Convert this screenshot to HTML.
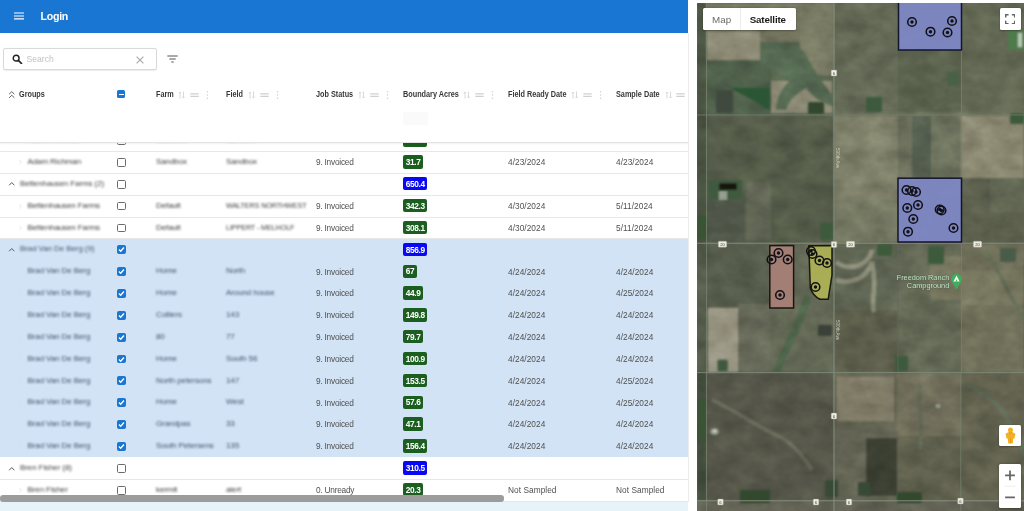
<!DOCTYPE html>
<html lang="en"><head><meta charset="utf-8"><title>Login</title>
<style>
html,body{margin:0;padding:0;}
body{width:1024px;height:511px;overflow:hidden;background:#fff;position:relative;font-family:"Liberation Sans",sans-serif;color:#333;}
.left{position:absolute;left:0;top:0;width:688px;height:511px;overflow:hidden;background:#fff;}
.vline{position:absolute;left:688px;top:33px;width:1px;height:469px;background:#ececec;}
.appbar{position:absolute;left:0;top:0;width:688px;height:33px;background:#1976d2;}
.appbar .burger{position:absolute;left:13.5px;top:12.3px;width:10.5px;height:8px;}
.appbar .title{position:absolute;left:40.5px;top:9.5px;font-size:10.6px;font-weight:700;color:#fff;line-height:13px;letter-spacing:-0.25px;}
.search{position:absolute;left:3.3px;top:48px;width:153.4px;height:21.5px;border:1px solid #d9d9d9;border-radius:2px;box-sizing:border-box;box-shadow:0 0.5px 1px rgba(0,0,0,.08);}
.search .ph{position:absolute;left:22.2px;top:5px;font-size:8.6px;color:#c2c2c2;line-height:11px;}
.rows{position:absolute;left:0;top:143px;width:688px;height:358.7px;overflow:hidden;}
.rowsin{position:absolute;left:0;top:-143px;width:688px;}
.row{position:absolute;left:0;width:688px;height:21.85px;box-sizing:border-box;border-bottom:1px solid #e7e7e7;}
.row.sel{border-bottom-color:transparent;}
.selbg{position:absolute;left:0;width:688px;background:#d2e3f5;}
.row span{position:absolute;white-space:nowrap;}
.tx,.nm{top:5.3px;font-size:8.3px;line-height:11px;color:#505050;letter-spacing:-0.1px;}
.st{letter-spacing:-0.23px;}
.dt{letter-spacing:0.05px;}
.blur{filter:blur(1px);color:#3c3c3c;font-size:8px;top:4.1px !important;}
.sel .blur{color:#40516a;}
.grp .blur{color:#444;}
.sel.grp .blur{color:#46566e;}
.up{font-size:7.2px !important;}
.cb{left:116.8px;top:6px;width:8.8px;height:8.8px;box-sizing:border-box;border:1.1px solid #6b6b6b;border-radius:1.6px;background:#fff;}
.cb.on{background:#1976d2;border-color:#1976d2;}
.cb svg{position:absolute;left:-1.1px;top:-1.1px;width:8.8px;height:8.8px;}
.chev{position:absolute;left:7.5px;top:6.7px;width:7.5px;height:7.5px;}
.chev2{position:absolute;left:16.5px;top:7.1px;width:6.5px;height:6.5px;}
.bd{left:403.1px;top:3.3px;height:12.5px;line-height:12.5px;padding:0.9px 2.6px 0 2.6px;border-radius:2px;background:#1b5e20;color:#fff;font-weight:700;font-size:8.3px;letter-spacing:-0.35px;}
.bd.blue{background:#0808f4;}
.hdr{position:absolute;left:0;top:33px;width:688px;height:110px;background:#fff;border-bottom:1px solid #e4e4e4;box-sizing:border-box;box-shadow:0 1px 1.5px rgba(0,0,0,.06);}
.hl{position:absolute;top:55.8px;font-size:8.2px;font-weight:700;color:#383838;line-height:11px;white-space:nowrap;transform:scaleX(0.888);transform-origin:0 50%;}
.hi{position:absolute;top:56.5px;width:8px;height:10px;}
.hscroll{position:absolute;left:0;top:495.3px;width:504px;height:6.4px;border-radius:3.2px;background:#9c9c9c;}
.foot{position:absolute;left:0;top:501.7px;width:688px;height:10px;background:#e6f3f9;}
.map{position:absolute;left:697px;top:3px;width:327px;height:508px;overflow:hidden;background:#6c705d;}
</style></head><body>
<div class="left">
 <div class="rows"><div class="rowsin">
<div class="selbg" style="top:239.36px;height:217.60px"></div>
<div class="row" style="top:130.11px"><svg class="chev2" viewBox="0 0 10 10"><path d="M3.5 1.5 L7 5 L3.5 8.5" fill="none" stroke="#dcdcdc" stroke-width="1"/></svg><span class="nm blur" style="left:27.5px">Adam Richman</span><span class="cb"></span><span class="tx blur" style="left:156px">Sandbox</span><span class="tx blur" style="left:226px">Sandbox</span><span class="tx st" style="left:316px">9. Invoiced</span><span class="bd">127.4</span><span class="tx dt" style="left:508px">4/22/2024</span><span class="tx dt" style="left:616px">4/23/2024</span></div>
<div class="row" style="top:151.96px"><svg class="chev2" viewBox="0 0 10 10"><path d="M3.5 1.5 L7 5 L3.5 8.5" fill="none" stroke="#dcdcdc" stroke-width="1"/></svg><span class="nm blur" style="left:27.5px">Adam Richman</span><span class="cb"></span><span class="tx blur" style="left:156px">Sandbox</span><span class="tx blur" style="left:226px">Sandbox</span><span class="tx st" style="left:316px">9. Invoiced</span><span class="bd">31.7</span><span class="tx dt" style="left:508px">4/23/2024</span><span class="tx dt" style="left:616px">4/23/2024</span></div>
<div class="row grp" style="top:173.81px"><svg class="chev" viewBox="0 0 10 10"><path d="M1.5 7 L5 3.4 L8.5 7" fill="none" stroke="#555" stroke-width="1.3"/></svg><span class="nm blur" style="left:20px">Bettenhausen Farms (2)</span><span class="cb"></span><span class="bd blue">650.4</span></div>
<div class="row" style="top:195.66px"><svg class="chev2" viewBox="0 0 10 10"><path d="M3.5 1.5 L7 5 L3.5 8.5" fill="none" stroke="#dcdcdc" stroke-width="1"/></svg><span class="nm blur" style="left:27.5px">Bettenhausen Farms</span><span class="cb"></span><span class="tx blur" style="left:156px">Default</span><span class="tx blur up" style="left:226px">WALTERS NORTHWEST</span><span class="tx st" style="left:316px">9. Invoiced</span><span class="bd">342.3</span><span class="tx dt" style="left:508px">4/30/2024</span><span class="tx dt" style="left:616px">5/11/2024</span></div>
<div class="row" style="top:217.51px"><svg class="chev2" viewBox="0 0 10 10"><path d="M3.5 1.5 L7 5 L3.5 8.5" fill="none" stroke="#dcdcdc" stroke-width="1"/></svg><span class="nm blur" style="left:27.5px">Bettenhausen Farms</span><span class="cb"></span><span class="tx blur" style="left:156px">Default</span><span class="tx blur up" style="left:226px">LIPPERT - MELHOLF</span><span class="tx st" style="left:316px">9. Invoiced</span><span class="bd">308.1</span><span class="tx dt" style="left:508px">4/30/2024</span><span class="tx dt" style="left:616px">5/11/2024</span></div>
<div class="row sel grp" style="top:239.36px"><svg class="chev" viewBox="0 0 10 10"><path d="M1.5 7 L5 3.4 L8.5 7" fill="none" stroke="#555" stroke-width="1.3"/></svg><span class="nm blur" style="left:20px">Brad Van De Berg (9)</span><span class="cb on"><svg viewBox="0 0 10 10"><path d="M2.2 5.2 L4.2 7.1 L7.9 2.9" fill="none" stroke="#fff" stroke-width="1.5"/></svg></span><span class="bd blue">856.9</span></div>
<div class="row sel" style="top:261.21px"><svg class="chev2" viewBox="0 0 10 10"><path d="M3.5 1.5 L7 5 L3.5 8.5" fill="none" stroke="#dcdcdc" stroke-width="1"/></svg><span class="nm blur" style="left:27.5px">Brad Van De Berg</span><span class="cb on"><svg viewBox="0 0 10 10"><path d="M2.2 5.2 L4.2 7.1 L7.9 2.9" fill="none" stroke="#fff" stroke-width="1.5"/></svg></span><span class="tx blur" style="left:156px">Home</span><span class="tx blur" style="left:226px">North</span><span class="tx st" style="left:316px">9. Invoiced</span><span class="bd">67</span><span class="tx dt" style="left:508px">4/24/2024</span><span class="tx dt" style="left:616px">4/24/2024</span></div>
<div class="row sel" style="top:283.06px"><svg class="chev2" viewBox="0 0 10 10"><path d="M3.5 1.5 L7 5 L3.5 8.5" fill="none" stroke="#dcdcdc" stroke-width="1"/></svg><span class="nm blur" style="left:27.5px">Brad Van De Berg</span><span class="cb on"><svg viewBox="0 0 10 10"><path d="M2.2 5.2 L4.2 7.1 L7.9 2.9" fill="none" stroke="#fff" stroke-width="1.5"/></svg></span><span class="tx blur" style="left:156px">Home</span><span class="tx blur" style="left:226px">Around house</span><span class="tx st" style="left:316px">9. Invoiced</span><span class="bd">44.9</span><span class="tx dt" style="left:508px">4/24/2024</span><span class="tx dt" style="left:616px">4/25/2024</span></div>
<div class="row sel" style="top:304.91px"><svg class="chev2" viewBox="0 0 10 10"><path d="M3.5 1.5 L7 5 L3.5 8.5" fill="none" stroke="#dcdcdc" stroke-width="1"/></svg><span class="nm blur" style="left:27.5px">Brad Van De Berg</span><span class="cb on"><svg viewBox="0 0 10 10"><path d="M2.2 5.2 L4.2 7.1 L7.9 2.9" fill="none" stroke="#fff" stroke-width="1.5"/></svg></span><span class="tx blur" style="left:156px">Colliers</span><span class="tx blur" style="left:226px">143</span><span class="tx st" style="left:316px">9. Invoiced</span><span class="bd">149.8</span><span class="tx dt" style="left:508px">4/24/2024</span><span class="tx dt" style="left:616px">4/24/2024</span></div>
<div class="row sel" style="top:326.76px"><svg class="chev2" viewBox="0 0 10 10"><path d="M3.5 1.5 L7 5 L3.5 8.5" fill="none" stroke="#dcdcdc" stroke-width="1"/></svg><span class="nm blur" style="left:27.5px">Brad Van De Berg</span><span class="cb on"><svg viewBox="0 0 10 10"><path d="M2.2 5.2 L4.2 7.1 L7.9 2.9" fill="none" stroke="#fff" stroke-width="1.5"/></svg></span><span class="tx blur" style="left:156px">80</span><span class="tx blur" style="left:226px">77</span><span class="tx st" style="left:316px">9. Invoiced</span><span class="bd">79.7</span><span class="tx dt" style="left:508px">4/24/2024</span><span class="tx dt" style="left:616px">4/24/2024</span></div>
<div class="row sel" style="top:348.61px"><svg class="chev2" viewBox="0 0 10 10"><path d="M3.5 1.5 L7 5 L3.5 8.5" fill="none" stroke="#dcdcdc" stroke-width="1"/></svg><span class="nm blur" style="left:27.5px">Brad Van De Berg</span><span class="cb on"><svg viewBox="0 0 10 10"><path d="M2.2 5.2 L4.2 7.1 L7.9 2.9" fill="none" stroke="#fff" stroke-width="1.5"/></svg></span><span class="tx blur" style="left:156px">Home</span><span class="tx blur" style="left:226px">South 56</span><span class="tx st" style="left:316px">9. Invoiced</span><span class="bd">100.9</span><span class="tx dt" style="left:508px">4/24/2024</span><span class="tx dt" style="left:616px">4/24/2024</span></div>
<div class="row sel" style="top:370.46px"><svg class="chev2" viewBox="0 0 10 10"><path d="M3.5 1.5 L7 5 L3.5 8.5" fill="none" stroke="#dcdcdc" stroke-width="1"/></svg><span class="nm blur" style="left:27.5px">Brad Van De Berg</span><span class="cb on"><svg viewBox="0 0 10 10"><path d="M2.2 5.2 L4.2 7.1 L7.9 2.9" fill="none" stroke="#fff" stroke-width="1.5"/></svg></span><span class="tx blur" style="left:156px">North petersons</span><span class="tx blur" style="left:226px">147</span><span class="tx st" style="left:316px">9. Invoiced</span><span class="bd">153.5</span><span class="tx dt" style="left:508px">4/24/2024</span><span class="tx dt" style="left:616px">4/25/2024</span></div>
<div class="row sel" style="top:392.31px"><svg class="chev2" viewBox="0 0 10 10"><path d="M3.5 1.5 L7 5 L3.5 8.5" fill="none" stroke="#dcdcdc" stroke-width="1"/></svg><span class="nm blur" style="left:27.5px">Brad Van De Berg</span><span class="cb on"><svg viewBox="0 0 10 10"><path d="M2.2 5.2 L4.2 7.1 L7.9 2.9" fill="none" stroke="#fff" stroke-width="1.5"/></svg></span><span class="tx blur" style="left:156px">Home</span><span class="tx blur" style="left:226px">West</span><span class="tx st" style="left:316px">9. Invoiced</span><span class="bd">57.6</span><span class="tx dt" style="left:508px">4/24/2024</span><span class="tx dt" style="left:616px">4/25/2024</span></div>
<div class="row sel" style="top:414.16px"><svg class="chev2" viewBox="0 0 10 10"><path d="M3.5 1.5 L7 5 L3.5 8.5" fill="none" stroke="#dcdcdc" stroke-width="1"/></svg><span class="nm blur" style="left:27.5px">Brad Van De Berg</span><span class="cb on"><svg viewBox="0 0 10 10"><path d="M2.2 5.2 L4.2 7.1 L7.9 2.9" fill="none" stroke="#fff" stroke-width="1.5"/></svg></span><span class="tx blur" style="left:156px">Grandpas</span><span class="tx blur" style="left:226px">33</span><span class="tx st" style="left:316px">9. Invoiced</span><span class="bd">47.1</span><span class="tx dt" style="left:508px">4/24/2024</span><span class="tx dt" style="left:616px">4/24/2024</span></div>
<div class="row sel" style="top:436.01px"><svg class="chev2" viewBox="0 0 10 10"><path d="M3.5 1.5 L7 5 L3.5 8.5" fill="none" stroke="#dcdcdc" stroke-width="1"/></svg><span class="nm blur" style="left:27.5px">Brad Van De Berg</span><span class="cb on"><svg viewBox="0 0 10 10"><path d="M2.2 5.2 L4.2 7.1 L7.9 2.9" fill="none" stroke="#fff" stroke-width="1.5"/></svg></span><span class="tx blur" style="left:156px">South Petersens</span><span class="tx blur" style="left:226px">135</span><span class="tx st" style="left:316px">9. Invoiced</span><span class="bd">156.4</span><span class="tx dt" style="left:508px">4/24/2024</span><span class="tx dt" style="left:616px">4/24/2024</span></div>
<div class="row grp" style="top:457.86px"><svg class="chev" viewBox="0 0 10 10"><path d="M1.5 7 L5 3.4 L8.5 7" fill="none" stroke="#555" stroke-width="1.3"/></svg><span class="nm blur" style="left:20px">Bren Fisher (8)</span><span class="cb"></span><span class="bd blue">310.5</span></div>
<div class="row" style="top:479.71px"><svg class="chev2" viewBox="0 0 10 10"><path d="M3.5 1.5 L7 5 L3.5 8.5" fill="none" stroke="#dcdcdc" stroke-width="1"/></svg><span class="nm blur" style="left:27.5px">Bren Fisher</span><span class="cb"></span><span class="tx blur" style="left:156px">kermit</span><span class="tx blur" style="left:226px">alert</span><span class="tx st" style="left:316px">0. Unready</span><span class="bd">20.3</span><span class="tx dt" style="left:508px">Not Sampled</span><span class="tx dt" style="left:616px">Not Sampled</span></div>
 </div></div>
 <div class="hdr">
  <svg class="chevd" style="position:absolute;left:7.5px;top:56.8px;width:7.5px;height:9px" viewBox="0 0 10 12"><path d="M1.5 5.6 L5 2.2 L8.5 5.6 M1.5 10.4 L5 7 L8.5 10.4" fill="none" stroke="#555" stroke-width="1.25"/></svg>
  <span class="hl" style="left:19px">Groups</span>
  <span style="position:absolute;left:116.7px;top:57.3px;width:8.8px;height:8.2px;border-radius:1.5px;background:#1976d2;"><span style="position:absolute;left:1.9px;top:3.4px;width:5px;height:1.4px;background:#fff"></span></span>
  <span class="hl" style="left:156px">Farm</span><svg class="hi" style="left:178.1px" viewBox="0 0 8 10"><path d="M2 8.5 V2 M0.8 3.2 L2 2 L3.2 3.2 M5.5 1.5 V8 M4.3 6.8 L5.5 8 L6.7 6.8" fill="none" stroke="#cfcfcf" stroke-width="0.8"/></svg><svg class="hi" style="left:189.79999999999998px;width:9px" viewBox="0 0 9 10"><path d="M0.3 3.9 H8.7 M0.3 6.3 H8.7" fill="none" stroke="#bdbdbd" stroke-width="0.9"/></svg><svg class="hi" style="left:205.8px;width:3px" viewBox="0 0 3 10"><circle cx="1.5" cy="1.8" r="0.7" fill="#ccc"/><circle cx="1.5" cy="5" r="0.7" fill="#ccc"/><circle cx="1.5" cy="8.2" r="0.7" fill="#ccc"/></svg><span class="hl" style="left:226px">Field</span><svg class="hi" style="left:248.0px" viewBox="0 0 8 10"><path d="M2 8.5 V2 M0.8 3.2 L2 2 L3.2 3.2 M5.5 1.5 V8 M4.3 6.8 L5.5 8 L6.7 6.8" fill="none" stroke="#cfcfcf" stroke-width="0.8"/></svg><svg class="hi" style="left:259.7px;width:9px" viewBox="0 0 9 10"><path d="M0.3 3.9 H8.7 M0.3 6.3 H8.7" fill="none" stroke="#bdbdbd" stroke-width="0.9"/></svg><svg class="hi" style="left:275.7px;width:3px" viewBox="0 0 3 10"><circle cx="1.5" cy="1.8" r="0.7" fill="#ccc"/><circle cx="1.5" cy="5" r="0.7" fill="#ccc"/><circle cx="1.5" cy="8.2" r="0.7" fill="#ccc"/></svg><span class="hl" style="left:316px">Job Status</span><svg class="hi" style="left:358.1px" viewBox="0 0 8 10"><path d="M2 8.5 V2 M0.8 3.2 L2 2 L3.2 3.2 M5.5 1.5 V8 M4.3 6.8 L5.5 8 L6.7 6.8" fill="none" stroke="#cfcfcf" stroke-width="0.8"/></svg><svg class="hi" style="left:369.8px;width:9px" viewBox="0 0 9 10"><path d="M0.3 3.9 H8.7 M0.3 6.3 H8.7" fill="none" stroke="#bdbdbd" stroke-width="0.9"/></svg><svg class="hi" style="left:385.8px;width:3px" viewBox="0 0 3 10"><circle cx="1.5" cy="1.8" r="0.7" fill="#ccc"/><circle cx="1.5" cy="5" r="0.7" fill="#ccc"/><circle cx="1.5" cy="8.2" r="0.7" fill="#ccc"/></svg><span class="hl" style="left:403px">Boundary Acres</span><svg class="hi" style="left:463.3px" viewBox="0 0 8 10"><path d="M2 8.5 V2 M0.8 3.2 L2 2 L3.2 3.2 M5.5 1.5 V8 M4.3 6.8 L5.5 8 L6.7 6.8" fill="none" stroke="#cfcfcf" stroke-width="0.8"/></svg><svg class="hi" style="left:475.0px;width:9px" viewBox="0 0 9 10"><path d="M0.3 3.9 H8.7 M0.3 6.3 H8.7" fill="none" stroke="#bdbdbd" stroke-width="0.9"/></svg><svg class="hi" style="left:491.0px;width:3px" viewBox="0 0 3 10"><circle cx="1.5" cy="1.8" r="0.7" fill="#ccc"/><circle cx="1.5" cy="5" r="0.7" fill="#ccc"/><circle cx="1.5" cy="8.2" r="0.7" fill="#ccc"/></svg><span class="hl" style="left:508px">Field Ready Date</span><svg class="hi" style="left:571.2px" viewBox="0 0 8 10"><path d="M2 8.5 V2 M0.8 3.2 L2 2 L3.2 3.2 M5.5 1.5 V8 M4.3 6.8 L5.5 8 L6.7 6.8" fill="none" stroke="#cfcfcf" stroke-width="0.8"/></svg><svg class="hi" style="left:582.9000000000001px;width:9px" viewBox="0 0 9 10"><path d="M0.3 3.9 H8.7 M0.3 6.3 H8.7" fill="none" stroke="#bdbdbd" stroke-width="0.9"/></svg><svg class="hi" style="left:598.9000000000001px;width:3px" viewBox="0 0 3 10"><circle cx="1.5" cy="1.8" r="0.7" fill="#ccc"/><circle cx="1.5" cy="5" r="0.7" fill="#ccc"/><circle cx="1.5" cy="8.2" r="0.7" fill="#ccc"/></svg><span class="hl" style="left:616px">Sample Date</span><svg class="hi" style="left:664.6px" viewBox="0 0 8 10"><path d="M2 8.5 V2 M0.8 3.2 L2 2 L3.2 3.2 M5.5 1.5 V8 M4.3 6.8 L5.5 8 L6.7 6.8" fill="none" stroke="#cfcfcf" stroke-width="0.8"/></svg><svg class="hi" style="left:676.3000000000001px;width:9px" viewBox="0 0 9 10"><path d="M0.3 3.9 H8.7 M0.3 6.3 H8.7" fill="none" stroke="#bdbdbd" stroke-width="0.9"/></svg><svg class="hi" style="left:692.3000000000001px;width:3px" viewBox="0 0 3 10"><circle cx="1.5" cy="1.8" r="0.7" fill="#ccc"/><circle cx="1.5" cy="5" r="0.7" fill="#ccc"/><circle cx="1.5" cy="8.2" r="0.7" fill="#ccc"/></svg>
  <span style="position:absolute;left:403px;top:79.3px;width:25px;height:13px;background:#fafafa;border-radius:2px"></span>
 </div>
 <div class="appbar">
  <svg class="burger" viewBox="0 0 10.5 8"><path d="M0 1 H10.5 M0 3.95 H10.5 M0 6.9 H10.5" stroke="#fff" stroke-width="1.15" fill="none"/></svg>
  <span class="title">Login</span>
 </div>
 <div class="search">
  <svg style="position:absolute;left:7.8px;top:4.8px;width:10.6px;height:10.6px" viewBox="0 0 12 12"><circle cx="4.7" cy="4.7" r="3.3" fill="none" stroke="#222" stroke-width="1.6"/><path d="M7.2 7.2 L10.8 10.8" stroke="#222" stroke-width="1.9" stroke-linecap="round"/></svg>
  <span class="ph">Search</span>
  <svg style="position:absolute;left:131.8px;top:6.6px;width:8px;height:8px" viewBox="0 0 8 8"><path d="M0.6 0.6 L7.4 7.4 M7.4 0.6 L0.6 7.4" stroke="#ababab" stroke-width="1.15" fill="none"/></svg>
 </div>
 <svg style="position:absolute;left:166.5px;top:54.5px;width:11px;height:8px" viewBox="0 0 11 8"><path d="M0.3 1 H10.7 M2.3 4 H8.7 M4.3 7 H6.7" stroke="#555" stroke-width="1.15" fill="none"/></svg>
 <div class="hscroll"></div>
 <div class="foot"></div>
</div>
<div class="vline"></div>
<div class="map">
<svg width="327" height="508" viewBox="697 3 327 508" style="position:absolute;left:0;top:0">
<defs><filter id="bl" x="-5%" y="-5%" width="110%" height="110%"><feGaussianBlur stdDeviation="1.1"/></filter><filter id="bl2" x="-20%" y="-20%" width="140%" height="140%"><feGaussianBlur stdDeviation="0.9"/></filter><filter id="nz" x="0" y="0" width="100%" height="100%" color-interpolation-filters="sRGB"><feTurbulence type="fractalNoise" baseFrequency="0.045 0.06" numOctaves="3" seed="7"/><feColorMatrix type="matrix" values="0.9 0 0 0 0.05  0.9 0 0 0 0.05  0.9 0 0 0 0.05  0 0 0 0 1"/></filter></defs>
<rect x="697" y="3" width="327" height="508" fill="#606453"/>
<g filter="url(#bl)">
<rect x="697" y="3" width="9" height="508" fill="#4c5242"/>
<rect x="706" y="3" width="128" height="112" fill="#58654f"/>
<rect x="706" y="3" width="66" height="28" fill="#747661"/>
<rect x="707" y="31" width="53" height="29" fill="#8c8a74"/>
<rect x="760" y="3" width="40" height="39" fill="#747661"/>
<rect x="706" y="60" width="65" height="55" fill="#50604c"/>
<rect x="771" y="81" width="61" height="32" fill="#8a8873"/>
<rect x="800" y="3" width="34" height="72" fill="#797a64"/>
<rect x="834" y="3" width="64" height="112" fill="#636955"/>
<rect x="898" y="50" width="63" height="65" fill="#5a624e"/>
<rect x="961" y="3" width="63" height="112" fill="#626752"/>
<rect x="834" y="112" width="190" height="6" fill="#6c705c"/>
<rect x="706" y="116" width="128" height="127" fill="#545b4a"/>
<rect x="746" y="182" width="25" height="58" fill="#626655"/>
<rect x="706" y="200" width="39" height="43" fill="#505648"/>
<rect x="834" y="116" width="64" height="127" fill="#7e8069"/>
<rect x="834" y="200" width="64" height="43" fill="#757862"/>
<rect x="898" y="116" width="14" height="62" fill="#6c705c"/>
<rect x="912" y="116" width="19" height="62" fill="#545e4f"/>
<rect x="931" y="116" width="30" height="62" fill="#6c725d"/>
<rect x="898" y="178" width="63" height="65" fill="#646856"/>
<rect x="961" y="116" width="63" height="62" fill="#8a8871"/>
<rect x="961" y="178" width="63" height="65" fill="#5c614e"/>
<rect x="990" y="178" width="34" height="34" fill="#646754"/>
<rect x="697" y="244" width="73" height="128" fill="#565b4c"/>
<rect x="708" y="308" width="30" height="64" fill="#989482"/>
<rect x="738" y="304" width="62" height="68" fill="#686a5a"/>
<rect x="770" y="244" width="64" height="128" fill="#626755"/>
<rect x="834" y="244" width="64" height="66" fill="#5e6553"/>
<rect x="834" y="310" width="64" height="62" fill="#5b5d4c"/>
<rect x="898" y="244" width="63" height="128" fill="#646854"/>
<rect x="930" y="256" width="31" height="44" fill="#76765f"/>
<rect x="961" y="244" width="63" height="128" fill="#6f705a"/>
<rect x="961" y="270" width="63" height="35" fill="#787860"/>
<rect x="697" y="372" width="9" height="139" fill="#424e3e"/>
<rect x="706" y="373" width="128" height="128" fill="#55574a"/>
<rect x="834" y="373" width="64" height="128" fill="#646452"/>
<rect x="837" y="377" width="57" height="44" fill="#807c68"/>
<rect x="866" y="438" width="31" height="58" fill="#3a4032"/>
<rect x="897" y="373" width="64" height="63" fill="#706e5a"/>
<rect x="897" y="436" width="64" height="65" fill="#5f5f4e"/>
<rect x="961" y="373" width="63" height="128" fill="#626250"/>
<rect x="697" y="501" width="327" height="10" fill="#646455"/>
<path d="M762 44 C775 40 796 40 806 54 C812 68 824 84 833 96 L833 106 C822 104 812 96 806 88 C800 92 790 98 786 110 L776 110 C776 96 784 86 790 80 C780 76 770 68 760 62 Z" fill="#566b52"/>
<path d="M836 262 C850 272 868 266 872 250 M836 280 C850 284 866 280 872 262 M872 262 C878 290 870 300 874 312" fill="none" stroke="#8d8f79" stroke-width="4.5"/>
<path d="M808 296 C802 318 790 340 776 372" fill="none" stroke="#50664c" stroke-width="7"/>
<path d="M712 400 C730 408 748 420 770 432 C790 440 800 452 812 470" fill="none" stroke="#6a6d5c" stroke-width="3.5"/>
<path d="M965 385 C985 392 1000 405 1012 425 C1018 440 1022 450 1024 456" fill="none" stroke="#5f6a55" stroke-width="4"/>
<path d="M920 385 C918 410 924 430 920 450" fill="none" stroke="#646a56" stroke-width="4"/>
<path d="M985 250 C1000 270 1010 300 1024 318" fill="none" stroke="#677059" stroke-width="4"/>
</g>
<rect x="697" y="3" width="327" height="508" filter="url(#nz)" opacity="0.2" style="mix-blend-mode:overlay"/>
<g filter="url(#bl2)">
<path d="M729 87.7 L769.8 87.7 L769.8 110.5 L750.8 99 Z" fill="#2a5636"/>
<rect x="716" y="90" width="17" height="23" fill="#3f4a3c" rx="1.5"/>
<rect x="866" y="97" width="16" height="15" fill="#3e5a3c" rx="1.5"/>
<rect x="947" y="72" width="13" height="14" fill="#4a6246" rx="1.5"/>
<rect x="808" y="102" width="16" height="12" fill="#33472f" rx="1.5"/>
<rect x="708" y="180" width="34" height="20" fill="#3f5a3f" rx="1.5"/>
<rect x="719" y="183" width="18" height="7" fill="#15170f" rx="1.5"/>
<rect x="697" y="215" width="10" height="25" fill="#3a5236" rx="1.5"/>
<rect x="820" y="223" width="13" height="17" fill="#3d5a3c" rx="1.5"/>
<rect x="1008" y="30" width="16" height="20" fill="#4f7a4c" rx="1.5"/>
<rect x="1010" y="113" width="14" height="11" fill="#3e5a3e" rx="1.5"/>
<rect x="877" y="244" width="15" height="12" fill="#3d5a3a" rx="1.5"/>
<rect x="928" y="246" width="16" height="18" fill="#3d5a3c" rx="1.5"/>
<rect x="1000" y="248" width="16" height="14" fill="#4a5c48" rx="1.5"/>
<rect x="818" y="325" width="14" height="11" fill="#3a4038" rx="1.5"/>
<rect x="717.5" y="359.7" width="10.200000000000045" height="11.800000000000011" fill="#3f5840" rx="1.5"/>
<rect x="895" y="356" width="13" height="15" fill="#3c5a3c" rx="1.5"/>
<rect x="740" y="490" width="30" height="13" fill="#30482e" rx="1.5"/>
<rect x="825" y="480" width="13" height="17" fill="#384a34" rx="1.5"/>
<rect x="858" y="482" width="12" height="14" fill="#384a34" rx="1.5"/>
<rect x="897" y="492" width="25" height="11" fill="#30482e" rx="1.5"/>
<rect x="697" y="400" width="9" height="40" fill="#3a5236" rx="1.5"/>
<rect x="719" y="192" width="8" height="1.6" fill="#c8cbbd"/><rect x="719" y="195" width="8" height="1.6" fill="#c8cbbd"/><rect x="719" y="198" width="8" height="1.4" fill="#c8cbbd"/>
<rect x="1018" y="33" width="4" height="14" fill="#b9c8b4"/>
<ellipse cx="714.5" cy="431.5" rx="4" ry="3.2" fill="#9ea596"/><rect x="713.6" y="430" width="2.4" height="1.8" fill="#e4e6dc"/>
<ellipse cx="938" cy="406" rx="2.6" ry="2" fill="#9aa090"/>
</g>
<g fill="none" stroke-linecap="butt">
<path d="M697 243.3 H1024" stroke="#808d7c" stroke-width="1.1"/>
<path d="M834 3 V511" stroke="#7f8e7d" stroke-width="1.1"/>
<path d="M706.5 3 V511" stroke="#76836f" stroke-width="0.8"/>
<path d="M697 115 H1024" stroke="#74806c" stroke-width="0.8"/>
<path d="M697 372.6 H1024" stroke="#7d8a78" stroke-width="0.9"/>
<path d="M697 500.8 H1024" stroke="#87927f" stroke-width="1"/>
<path d="M960.8 372 V511 M961.5 3 V178" stroke="#75826f" stroke-width="0.8"/>
<path d="M961.5 244 V372" stroke="#7a806e" stroke-width="0.7"/>
<path d="M898 244 V372" stroke="#60685a" stroke-width="0.8"/>
</g>
<text transform="translate(835.6,148) rotate(90)" font-size="4.6" font-family="Liberation Sans, sans-serif" fill="#d8dacb" opacity="0.85">500th Ave</text>
<text transform="translate(835.6,320) rotate(90)" font-size="4.6" font-family="Liberation Sans, sans-serif" fill="#d8dacb" opacity="0.85">500th Ave</text>
<rect x="898.5" y="0" width="63" height="50" fill="#7f88c6" fill-opacity="0.93" stroke="#15152e" stroke-width="1.5"/>
<rect x="898" y="178.2" width="63.5" height="63.8" fill="#7f88c6" fill-opacity="0.93" stroke="#15152e" stroke-width="1.5"/>
<rect x="769.8" y="245.6" width="23.8" height="62.4" fill="#a68077" fill-opacity="0.95" stroke="#1c1512" stroke-width="1.5"/>
<path d="M808.8 245.7 H832 V275 L828.2 299.3 H820 Q813 296 810.3 288 Z" fill="#adb155" fill-opacity="0.95" stroke="#1a1a0c" stroke-width="1.5" stroke-linejoin="round"/>
<circle cx="912" cy="22" r="4.3" fill="none" stroke="#111118" stroke-width="1.55"/><circle cx="912" cy="22" r="1.7" fill="#111118"/>
<circle cx="930.5" cy="31.7" r="4.3" fill="none" stroke="#111118" stroke-width="1.55"/><circle cx="930.5" cy="31.7" r="1.7" fill="#111118"/>
<circle cx="947.5" cy="32.5" r="4.3" fill="none" stroke="#111118" stroke-width="1.55"/><circle cx="947.5" cy="32.5" r="1.7" fill="#111118"/>
<circle cx="952" cy="21" r="4.3" fill="none" stroke="#111118" stroke-width="1.55"/><circle cx="952" cy="21" r="1.7" fill="#111118"/>
<circle cx="906.5" cy="190" r="4.3" fill="none" stroke="#111118" stroke-width="1.55"/><circle cx="906.5" cy="190" r="1.7" fill="#111118"/>
<circle cx="912" cy="191" r="4.3" fill="none" stroke="#111118" stroke-width="1.55"/><circle cx="912" cy="191" r="1.7" fill="#111118"/>
<circle cx="916" cy="192" r="4.3" fill="none" stroke="#111118" stroke-width="1.55"/><circle cx="916" cy="192" r="1.7" fill="#111118"/>
<circle cx="918" cy="205" r="4.3" fill="none" stroke="#111118" stroke-width="1.55"/><circle cx="918" cy="205" r="1.7" fill="#111118"/>
<circle cx="907.3" cy="208" r="4.3" fill="none" stroke="#111118" stroke-width="1.55"/><circle cx="907.3" cy="208" r="1.7" fill="#111118"/>
<circle cx="913.3" cy="219" r="4.3" fill="none" stroke="#111118" stroke-width="1.55"/><circle cx="913.3" cy="219" r="1.7" fill="#111118"/>
<circle cx="908" cy="231.7" r="4.3" fill="none" stroke="#111118" stroke-width="1.55"/><circle cx="908" cy="231.7" r="1.7" fill="#111118"/>
<circle cx="939.7" cy="209.5" r="4.3" fill="none" stroke="#111118" stroke-width="1.55"/><circle cx="939.7" cy="209.5" r="1.7" fill="#111118"/>
<circle cx="941.5" cy="210.5" r="4.3" fill="none" stroke="#111118" stroke-width="1.55"/><circle cx="941.5" cy="210.5" r="1.7" fill="#111118"/>
<circle cx="953.5" cy="228" r="4.3" fill="none" stroke="#111118" stroke-width="1.55"/><circle cx="953.5" cy="228" r="1.7" fill="#111118"/>
<circle cx="778.5" cy="253" r="4.3" fill="none" stroke="#111118" stroke-width="1.55"/><circle cx="778.5" cy="253" r="1.7" fill="#111118"/>
<circle cx="771.5" cy="259.5" r="4.3" fill="none" stroke="#111118" stroke-width="1.55"/><circle cx="771.5" cy="259.5" r="1.7" fill="#111118"/>
<circle cx="787.7" cy="259.5" r="4.3" fill="none" stroke="#111118" stroke-width="1.55"/><circle cx="787.7" cy="259.5" r="1.7" fill="#111118"/>
<circle cx="780" cy="295" r="4.3" fill="none" stroke="#111118" stroke-width="1.55"/><circle cx="780" cy="295" r="1.7" fill="#111118"/>
<circle cx="811" cy="251" r="4.3" fill="none" stroke="#111118" stroke-width="1.55"/><circle cx="811" cy="251" r="1.7" fill="#111118"/>
<circle cx="812.5" cy="254" r="4.3" fill="none" stroke="#111118" stroke-width="1.55"/><circle cx="812.5" cy="254" r="1.7" fill="#111118"/>
<circle cx="819.5" cy="260.5" r="4.3" fill="none" stroke="#111118" stroke-width="1.55"/><circle cx="819.5" cy="260.5" r="1.7" fill="#111118"/>
<circle cx="827" cy="263" r="4.3" fill="none" stroke="#111118" stroke-width="1.55"/><circle cx="827" cy="263" r="1.7" fill="#111118"/>
<circle cx="815.5" cy="287" r="4.3" fill="none" stroke="#111118" stroke-width="1.55"/><circle cx="815.5" cy="287" r="1.7" fill="#111118"/>
<rect x="718.3" y="241.2" width="8.4" height="6" rx="0.8" fill="#ecece0" stroke="#9a9a90" stroke-width="0.4"/><text x="722.5" y="245.7" font-size="4.2" font-family="Liberation Sans, sans-serif" text-anchor="middle" fill="#444">20</text>
<rect x="846.3" y="241.2" width="8.4" height="6" rx="0.8" fill="#ecece0" stroke="#9a9a90" stroke-width="0.4"/><text x="850.5" y="245.7" font-size="4.2" font-family="Liberation Sans, sans-serif" text-anchor="middle" fill="#444">20</text>
<rect x="973.3" y="241.2" width="8.4" height="6" rx="0.8" fill="#ecece0" stroke="#9a9a90" stroke-width="0.4"/><text x="977.5" y="245.7" font-size="4.2" font-family="Liberation Sans, sans-serif" text-anchor="middle" fill="#444">20</text>
<rect x="831.2" y="241.6" width="5.6" height="6" rx="0.8" fill="#ecece0" stroke="#9a9a90" stroke-width="0.4"/><text x="834" y="246.1" font-size="4.2" font-family="Liberation Sans, sans-serif" text-anchor="middle" fill="#444">6</text>
<rect x="831.2" y="70" width="5.6" height="6" rx="0.8" fill="#ecece0" stroke="#9a9a90" stroke-width="0.4"/><text x="834" y="74.5" font-size="4.2" font-family="Liberation Sans, sans-serif" text-anchor="middle" fill="#444">6</text>
<rect x="831.2" y="413" width="5.6" height="6" rx="0.8" fill="#ecece0" stroke="#9a9a90" stroke-width="0.4"/><text x="834" y="417.5" font-size="4.2" font-family="Liberation Sans, sans-serif" text-anchor="middle" fill="#444">6</text>
<rect x="717.7" y="499" width="5.6" height="6" rx="0.8" fill="#ecece0" stroke="#9a9a90" stroke-width="0.4"/><text x="720.5" y="503.5" font-size="4.2" font-family="Liberation Sans, sans-serif" text-anchor="middle" fill="#444">6</text>
<rect x="813.2" y="499" width="5.6" height="6" rx="0.8" fill="#ecece0" stroke="#9a9a90" stroke-width="0.4"/><text x="816" y="503.5" font-size="4.2" font-family="Liberation Sans, sans-serif" text-anchor="middle" fill="#444">6</text>
<rect x="846.2" y="499" width="5.6" height="6" rx="0.8" fill="#ecece0" stroke="#9a9a90" stroke-width="0.4"/><text x="849" y="503.5" font-size="4.2" font-family="Liberation Sans, sans-serif" text-anchor="middle" fill="#444">6</text>
<rect x="957.7" y="498" width="5.6" height="6" rx="0.8" fill="#ecece0" stroke="#9a9a90" stroke-width="0.4"/><text x="960.5" y="502.5" font-size="4.2" font-family="Liberation Sans, sans-serif" text-anchor="middle" fill="#444">6</text>
<g font-family="Liberation Sans, sans-serif" font-size="7.35" fill="#c9ecd0" text-anchor="end" style="paint-order:stroke" stroke="#3c4a38" stroke-width="0.5"><text x="949.3" y="279.6">Freedom Ranch</text><text x="949.3" y="287.8">Campground</text></g>
<g><circle cx="956.5" cy="279.2" r="5.4" fill="#40ad5c"/><path d="M956.5 289.4 L952.3 282.6 H960.7 Z" fill="#40ad5c"/><path d="M956.5 275.4 L959.6 281.6 H953.4 Z" fill="#fff"/><path d="M956.5 279 L957.5 281.6 H955.5 Z" fill="#40ad5c"/></g>
</svg>
<div style="position:absolute;left:5.5px;top:5.4px;width:93.5px;height:21.6px;background:#fff;border-radius:1.5px;box-shadow:0 0.5px 2px rgba(0,0,0,.3)"><span style="position:absolute;left:9.6px;top:5.5px;font-size:9.8px;line-height:12px;color:#6a6a6a">Map</span><span style="position:absolute;left:37.5px;top:0;width:1px;height:21.6px;background:#ececec"></span><span style="position:absolute;left:47.2px;top:5.5px;font-size:9.8px;line-height:12px;font-weight:700;color:#1a1a1a;letter-spacing:-0.15px">Satellite</span></div>
<div style="position:absolute;left:302.5px;top:5.4px;width:21.6px;height:21.6px;background:#fff;border-radius:1.5px;box-shadow:0 0.5px 2px rgba(0,0,0,.3)"><svg style="position:absolute;left:5.6px;top:5.6px;width:10.4px;height:10.4px" viewBox="0 0 10 10"><path d="M0.7 3.4 V0.7 H3.4 M6.6 0.7 H9.3 V3.4 M9.3 6.6 V9.3 H6.6 M3.4 9.3 H0.7 V6.6" fill="none" stroke="#666" stroke-width="1.4"/></svg></div>
<div style="position:absolute;left:302px;top:421.8px;width:22px;height:21.2px;background:#fff;border-radius:1.5px;box-shadow:0 0.5px 2px rgba(0,0,0,.3)"><svg style="position:absolute;left:5.5px;top:2.4px;width:11px;height:17px" viewBox="0 0 11 17"><path d="M5.5 0.4 C7.1 0.4 8 1.5 8 2.9 C8 4 7.4 4.9 6.6 5.2 C8.6 5.5 10.2 6.3 10.4 7.2 L9.4 11.6 H8.3 L7.8 16.4 H3.2 L2.7 11.6 H1.6 L0.6 7.2 C0.8 6.3 2.4 5.5 4.4 5.2 C3.6 4.9 3 4 3 2.9 C3 1.5 3.9 0.4 5.5 0.4 Z" fill="#f3b023"/><path d="M3.6 5.6 Q5.5 6.6 7.4 5.6 M5.5 11.5 V16.2" fill="none" stroke="#d8920f" stroke-width="0.7"/></svg></div>
<div style="position:absolute;left:302px;top:461.2px;width:22px;height:44.1px;background:#fff;border-radius:1.5px;box-shadow:0 0.5px 2px rgba(0,0,0,.3)"><svg style="position:absolute;left:0;top:0;width:22px;height:44px" viewBox="0 0 22 44"><path d="M6.1 11.3 H15.9 M11 6.4 V16.2 M6.1 33.4 H15.9" stroke="#666" stroke-width="1.75" fill="none"/><path d="M5 22.2 H17" stroke="#e6e6e6" stroke-width="0.6"/></svg></div>
</div>
</body></html>
